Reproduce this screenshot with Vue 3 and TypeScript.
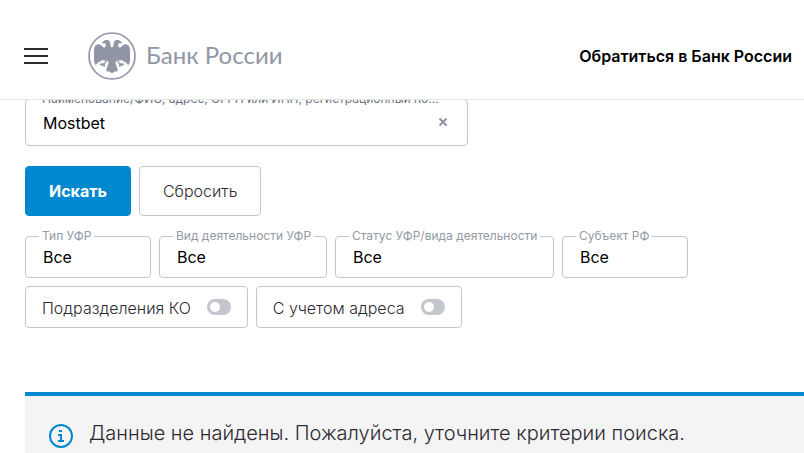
<script setup lang="ts">
import { ref } from 'vue'

interface Filter {
  id: string
  label: string
  size: string
}

const query = ref('Mostbet')
const branches = ref(false)
const withAddress = ref(false)

const filters: Filter[] = [
  { id: 'type', label: 'Тип УФР', size: 'small' },
  { id: 'activity', label: 'Вид деятельности УФР', size: 'medium' },
  { id: 'status', label: 'Статус УФР/вида деятельности', size: 'large' },
  { id: 'region', label: 'Субъект РФ', size: 'small' },
]

function reset() {
  query.value = ''
  branches.value = false
  withAddress.value = false
}
</script>

<template>
  <header class="header">
    <button class="menu" type="button" aria-label="Меню">
      <svg width="24" height="16" viewBox="0 0 24 16" aria-hidden="true">
        <path d="M0 1h24M0 8h24M0 15h24" stroke="#2d2a32" stroke-width="2" />
      </svg>
    </button>
    <a class="logo" href="#">
      <svg class="emblem" viewBox="0 0 144 144" aria-hidden="true">
        <defs>
          <g id="half-eagle">
            <path
              d="M73 46H69L67 35Q67 25 57 24Q48 23 45 29L40 34L51 34Q56 38 52 45Q49 49 44 44Q33 33 24 39Q17 45 18 60L18 86L21 98L26 97L31 91L38 88L43 84L50 86L59 86L62 92L59 101L54 114L59 119L64 118L68 122H73Z"
              fill="currentColor"
            />
            <path
              d="M57 88L48 95L35 97M48 95L42 103M48 95L50 103"
              fill="none"
              stroke="currentColor"
              stroke-width="4"
            />
          </g>
        </defs>
        <circle cx="72" cy="72" r="69" fill="none" stroke="currentColor" stroke-width="5" />
        <use href="#half-eagle" />
        <use href="#half-eagle" transform="translate(144 0) scale(-1 1)" />
      </svg>
      <span>Банк России</span>
    </a>
    <a class="contact" href="#">Обратиться в Банк России</a>
  </header>

  <main class="content">
    <form @submit.prevent>
      <div class="field search">
        <label class="caption" for="query">Наименование/ФИО, адрес, ОГРН или ИНН, регистрационный но...</label>
        <input id="query" v-model="query" type="text" autocomplete="off" />
        <button class="clear" type="button" aria-label="Очистить" @click="query = ''">
          <svg width="10" height="10" viewBox="0 0 10 10" aria-hidden="true">
            <path d="M1.5 1.5l7 7M8.5 1.5l-7 7" stroke="currentColor" stroke-width="2" />
          </svg>
        </button>
      </div>

      <div class="row actions">
        <button class="button primary" type="submit">Искать</button>
        <button class="button" type="button" @click="reset">Сбросить</button>
      </div>

      <div class="row">
        <div v-for="filter in filters" :key="filter.id" class="field" :class="filter.size">
          <label class="caption" :for="filter.id">{{ filter.label }}</label>
          <select :id="filter.id">
            <option>Все</option>
          </select>
        </div>
      </div>

      <div class="row toggles">
        <label class="toggle">
          <span>Подразделения КО</span>
          <input v-model="branches" type="checkbox" role="switch" />
        </label>
        <label class="toggle">
          <span>С учетом адреса</span>
          <input v-model="withAddress" type="checkbox" role="switch" />
        </label>
      </div>
    </form>

    <section class="notice" role="status">
      <svg class="info" width="24" height="24" viewBox="0 0 24 24" aria-hidden="true">
        <circle cx="12" cy="12" r="11" fill="none" stroke="currentColor" stroke-width="2" />
        <path d="M10 6h3v2h-3zM9 10h4v6h2v2H9v-2h2v-4H9z" fill="currentColor" />
      </svg>
      <p>Данные не найдены. Пожалуйста, уточните критерии поиска.</p>
    </section>
  </main>
</template>

<style>
body {
  background: #fff;
  overflow: hidden;
}
</style>

<style scoped>
.header,
.content {
  font-family: Inter, 'Liberation Sans', sans-serif;
  color: #000;
}

.header {
  position: relative;
  z-index: 2;
  display: flex;
  align-items: center;
  box-sizing: border-box;
  height: 100px;
  padding: 12px 12px 0 24px;
  border-bottom: 1px solid #e4e4e6;
  background: #fff;
}

button,
input,
select {
  margin: 0;
  font: inherit;
  color: inherit;
}

.menu {
  display: flex;
  padding: 0;
  border: 0;
  background: none;
}

.logo {
  display: flex;
  align-items: center;
  gap: 10px;
  margin-left: 40px;
  color: #9096a5;
  font: 24px/32px Lato, sans-serif;
  text-decoration: none;
}

.logo span {
  padding-bottom: 2px;
}

.emblem {
  width: 48px;
  height: 48px;
}

.contact {
  margin-left: auto;
  color: #000;
  font-size: 16px;
  font-weight: 600;
  line-height: 24px;
  text-decoration: none;
}

.content {
  padding-left: 25px;
  font-size: 16px;
  line-height: 24px;
}

.field {
  position: relative;
  box-sizing: border-box;
  height: 42px;
  border: 1px solid #c3c6cc;
  border-radius: 4px;
}

.search {
  display: flex;
  align-items: center;
  width: 443px;
  height: 47px;
  margin-top: -1px;
  padding-right: 19px;
}

.caption {
  position: absolute;
  top: -9px;
  left: 13px;
  padding: 0 3px;
  background: #fff;
  color: #9399a5;
  font-size: 12px;
  line-height: 16px;
  white-space: nowrap;
}

.search .caption {
  color: #69707e;
}

.field input,
.field select {
  flex: 1;
  width: 100%;
  height: 100%;
  box-sizing: border-box;
  padding: 0 17px;
  border: 0;
  outline: 0;
  background: none;
  appearance: none;
}

.clear {
  display: flex;
  padding: 0 0 2px;
  border: 0;
  background: none;
  color: #8c93a1;
}

.row {
  display: flex;
  gap: 8px;
}

.actions {
  margin: 20px 0;
}

.button {
  height: 50px;
  padding: 0 23px;
  border: 1px solid #c3c6cc;
  border-radius: 4px;
  background: #fff;
  color: #2d2a32;
  font-weight: 300;
}

.primary {
  border-color: #0088cf;
  background: #0088cf;
  color: #fff;
  font-weight: 700;
}

.small {
  width: 126px;
}

.medium {
  width: 168px;
}

.large {
  width: 219px;
}

.toggles {
  margin-top: 8px;
}

.toggle {
  display: flex;
  align-items: center;
  gap: 16px;
  box-sizing: border-box;
  height: 42px;
  padding: 0 16px;
  border: 1px solid #c3c6cc;
  border-radius: 4px;
  color: #2d2a32;
  font-weight: 300;
}

.toggle span {
  padding-top: 2px;
}

.toggle input {
  display: flex;
  align-items: center;
  width: 24px;
  height: 16px;
  padding: 0 3px;
  border-radius: 8px;
  background: #c3c6cc;
  box-sizing: border-box;
  appearance: none;
}

.toggle input::before {
  width: 10px;
  height: 10px;
  border-radius: 50%;
  background: #fff;
  content: '';
}

.toggle input:checked {
  justify-content: flex-end;
  background: #0088cf;
}

.notice {
  display: flex;
  gap: 16px;
  margin-top: 64px;
  padding: 24px;
  border-top: 4px solid #0088cf;
  background: #f4f4f4;
  color: #2d2a32;
  font-size: 20px;
  font-weight: 300;
  line-height: 26px;
}

.notice p {
  margin: 0;
}

.info {
  flex: none;
  margin-top: 4px;
  color: #0088cf;
}
</style>
